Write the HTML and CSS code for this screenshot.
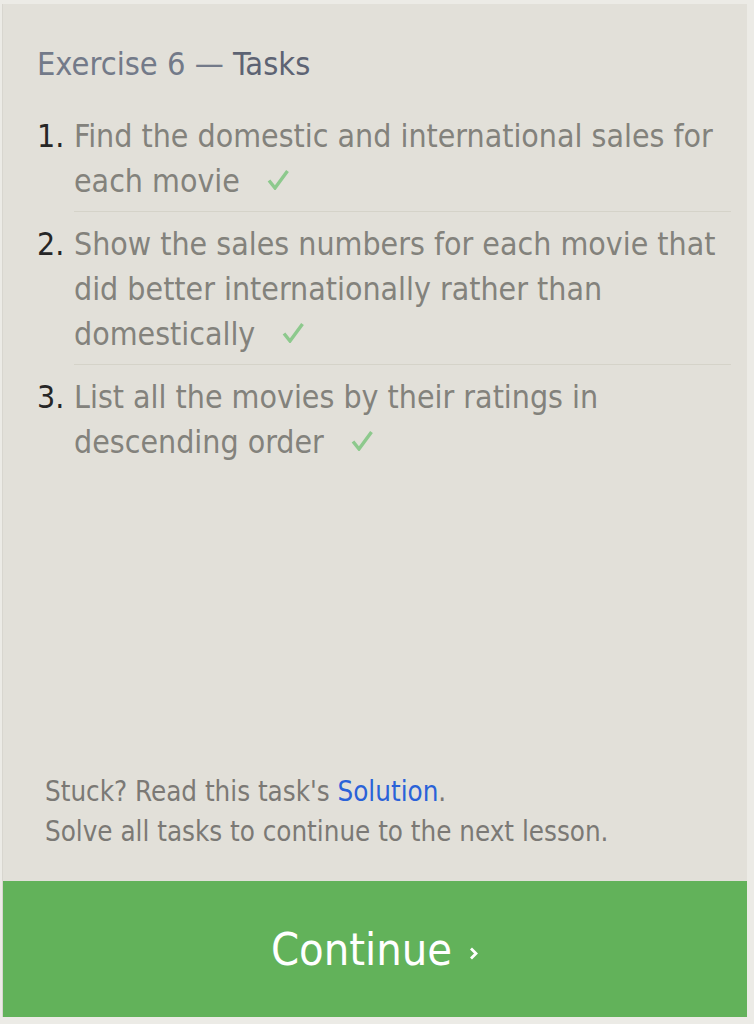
FILE: index.html
```html
<!DOCTYPE html>
<html>
<head>
<meta charset="utf-8">
<link rel="stylesheet" href="styles.css">
</head>
<body>
<div class="panel">
  <div class="content">
    <h2 class="title">Exercise 6 — <span class="strong">Tasks</span></h2>
    <ol class="tasks">
      <li class="task"><span class="num">1.</span><span class="text">Find the domestic and international sales for each movie<svg class="check" width="22" height="21" viewBox="0 0 22 21"><path d="M2 11.5 L8 19 L20.5 2" fill="none" stroke="#8dc98d" stroke-width="3.4" stroke-linecap="butt" stroke-linejoin="miter"/></svg></span></li>
      <li class="task"><span class="num">2.</span><span class="text">Show the sales numbers for each movie that did better internationally rather than domestically<svg class="check" width="22" height="21" viewBox="0 0 22 21"><path d="M2 11.5 L8 19 L20.5 2" fill="none" stroke="#8dc98d" stroke-width="3.4" stroke-linecap="butt" stroke-linejoin="miter"/></svg></span></li>
      <li class="task last"><span class="num">3.</span><span class="text">List all the movies by their ratings in descending order<svg class="check" width="22" height="21" viewBox="0 0 22 21"><path d="M2 11.5 L8 19 L20.5 2" fill="none" stroke="#8dc98d" stroke-width="3.4" stroke-linecap="butt" stroke-linejoin="miter"/></svg></span></li>
    </ol>
  </div>
  <div class="footer">
    <p>Stuck? Read this task's <a class="link" href="#">Solution</a>.</p>
    <p>Solve all tasks to continue to the next lesson.</p>
  </div>
  <div class="button">Continue<svg class="chev" width="10" height="13" viewBox="0 0 10 13"><path d="M2 1.5 L7 6.5 L2 11.5" fill="none" stroke="#ffffff" stroke-width="2.8"/></svg></div>
</div>
</body>
</html>
```

FILE: styles.css
```css
html, body {
  margin: 0;
  padding: 0;
  background: #ecebe6;
}
body {
  padding: 4px 7px 7px 2px;
  height: 1024px;
  box-sizing: border-box;
  font-family: "DejaVu Sans Condensed", "DejaVu Sans", sans-serif;
}
.panel {
  background: #e2e0d9;
  height: 100%;
  display: flex;
  flex-direction: column;
  border-left: 1px solid #d8d6cf;
}
.content {
  flex: 1;
  padding: 0 16px 0 34px;
}
.title {
  margin: 40px 0 0;
  font-weight: normal;
  font-size: 32.3px;
  line-height: 40px;
  color: #737a89;
}
.title .strong {
  color: #5d6373;
}
.tasks {
  list-style: none;
  margin: 20px 0 0;
  padding: 0;
}
.task {
  display: flex;
  font-size: 31.8px;
  line-height: 45px;
  padding: 9px 0 8px;
}
.task .num {
  width: 37px;
  flex: none;
  color: #262626;
}
.task .text {
  flex: 1;
  color: #83827c;
  border-bottom: 1px solid #d5d3c9;
  padding-bottom: 8px;
  margin-bottom: -8px;
}
.task.last .text { border-bottom: none; }
.check {
  margin-left: 27px;
  vertical-align: 2px;
}
.footer {
  padding: 0 0 30px 42px;
  font-size: 27.5px;
  line-height: 40px;
  color: #7b7975;
}
.footer p { margin: 0; }
.link {
  color: #2a62d8;
  text-decoration: none;
}
.button {
  background: #62b25a;
  height: 136px;
  display: flex;
  align-items: center;
  justify-content: center;
  color: #fff;
  font-size: 44.8px;
}
.chev {
  margin-left: 17px;
  margin-top: 8px;
}
```
